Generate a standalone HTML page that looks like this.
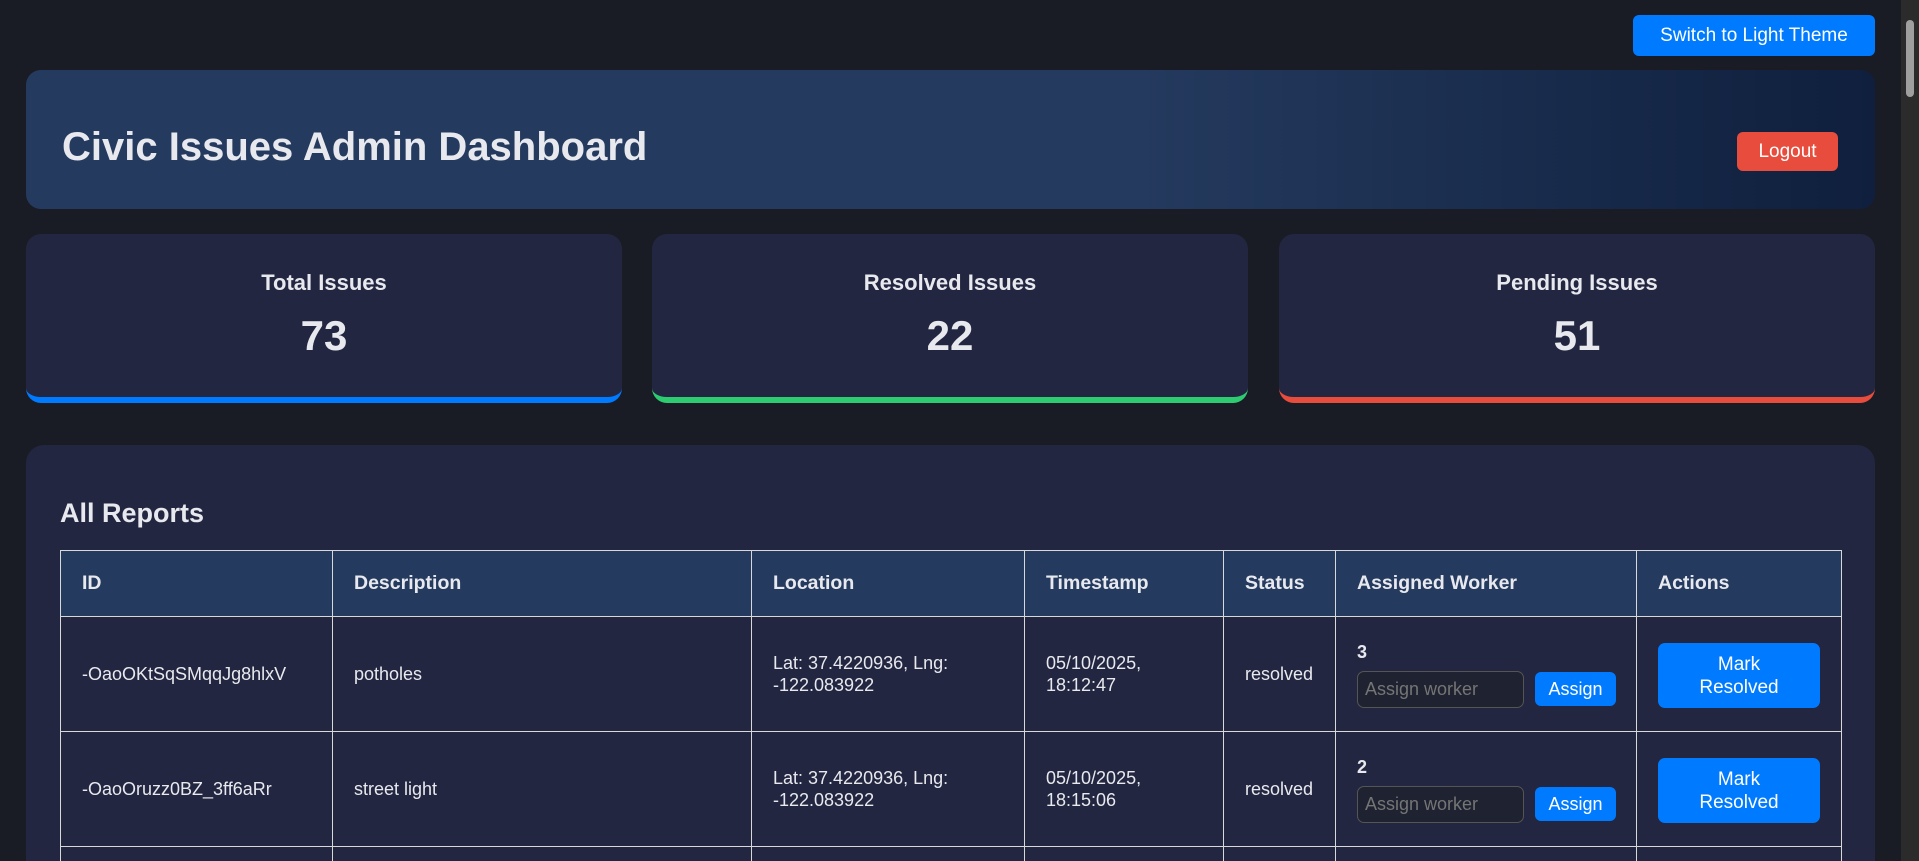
<!DOCTYPE html>
<html><head><meta charset="utf-8"><style>
*{box-sizing:border-box;margin:0;padding:0}
html,body{width:1919px;height:861px;overflow:hidden;background:#1a1c25;font-family:"Liberation Sans",Arial,sans-serif;color:#e8e9ee}
#wrap{position:relative;width:1919px;height:861px;overflow:hidden}
.abs{position:absolute}
.btn{background:#007bff;color:#fff;border-radius:6px;display:flex;align-items:center;justify-content:center;text-align:center}
#theme{left:1633px;top:15px;width:242px;height:41px;font-size:19px}
#hdr{left:26px;top:70px;width:1849px;height:139px;border-radius:15px;background:linear-gradient(90deg,#243a5e 0%,#243a5e 60%,#0f1f3d 100%)}
#hdr h1{position:absolute;left:36px;top:55px;font-size:40px;font-weight:bold;line-height:45px;color:#e8e9ee}
#logout{left:1737px;top:132px;width:101px;height:39px;background:#e74c3c;color:#fff;border-radius:6px;font-size:19px;display:flex;align-items:center;justify-content:center}
.card{top:234px;height:169px;width:596px;background:#222640;border-radius:15px;text-align:center}
.card h3{margin-top:36px;font-size:22px;line-height:26px;font-weight:bold}
.card .n{margin-top:16px;font-size:42px;line-height:48px;font-weight:bold}
#panel{left:26px;top:445px;width:1849px;height:416px;background:#222640;border-radius:18px 18px 0 0;overflow:hidden}
#panel h2{position:absolute;left:34px;top:52px;font-size:27px;font-weight:bold;line-height:32px}
table{position:absolute;left:34px;top:105px;border-collapse:collapse;font-size:18px;table-layout:fixed;width:1781px}
td,th{border:1.5px solid #d8d8d8;padding:0 21px;text-align:left;vertical-align:middle;white-space:nowrap}
th{background:#243a5e;height:66px;font-size:19.5px;font-weight:bold}
td{height:115px;line-height:22px}
input{display:inline-block;width:167px;height:37px;background:#1f2230;border:1px solid #555;border-radius:7px;color:#888;font-size:18px;padding-left:7px;font-family:inherit;vertical-align:middle}
.as{display:inline-flex;width:81px;height:34px;margin-left:11px;vertical-align:middle;font-size:18px}
.mr{width:162px;height:65px;font-size:19px;line-height:23px;border-radius:7px;margin-top:3px}
#sb{left:1901px;top:0;width:18px;height:861px;background:#2b2b2b}
#thumb{left:1906px;top:20px;width:8px;height:77px;background:#9f9f9f;border-radius:4px}
</style></head><body><div id="wrap">
<div class="abs btn" id="theme">Switch to Light Theme</div>
<div class="abs" id="hdr"><h1>Civic Issues Admin Dashboard</h1></div>
<div class="abs" id="logout">Logout</div>
<div class="abs card" style="left:26px;border-bottom:6px solid #007bff"><h3>Total Issues</h3><div class="n">73</div></div>
<div class="abs card" style="left:652px;border-bottom:6px solid #2ecc71"><h3>Resolved Issues</h3><div class="n">22</div></div>
<div class="abs card" style="left:1279px;border-bottom:6px solid #e74c3c"><h3>Pending Issues</h3><div class="n">51</div></div>
<div class="abs" id="panel"><h2>All Reports</h2>
<table>
<colgroup><col style="width:272px"><col style="width:419px"><col style="width:273px"><col style="width:199px"><col style="width:112px"><col style="width:301px"><col style="width:205px"></colgroup>
<tr><th>ID</th><th>Description</th><th>Location</th><th>Timestamp</th><th>Status</th><th>Assigned Worker</th><th>Actions</th></tr>
<tr><td>-OaoOKtSqSMqqJg8hlxV</td><td>potholes</td><td>Lat: 37.4220936, Lng:<br>-122.083922</td><td>05/10/2025,<br>18:12:47</td><td>resolved</td><td><b>3</b><div style="margin-top:8px"><input placeholder="Assign worker"><span class="btn as">Assign</span></div></td><td><div class="btn mr">Mark<br>Resolved</div></td></tr>
<tr><td>-OaoOruzz0BZ_3ff6aRr</td><td>street light</td><td>Lat: 37.4220936, Lng:<br>-122.083922</td><td>05/10/2025,<br>18:15:06</td><td>resolved</td><td><b>2</b><div style="margin-top:8px"><input placeholder="Assign worker"><span class="btn as">Assign</span></div></td><td><div class="btn mr">Mark<br>Resolved</div></td></tr>
<tr><td>&nbsp;</td><td></td><td></td><td></td><td></td><td></td><td></td></tr>
</table></div>
<div class="abs" id="sb"></div>
<div class="abs" id="thumb"></div>
</div></body></html>
